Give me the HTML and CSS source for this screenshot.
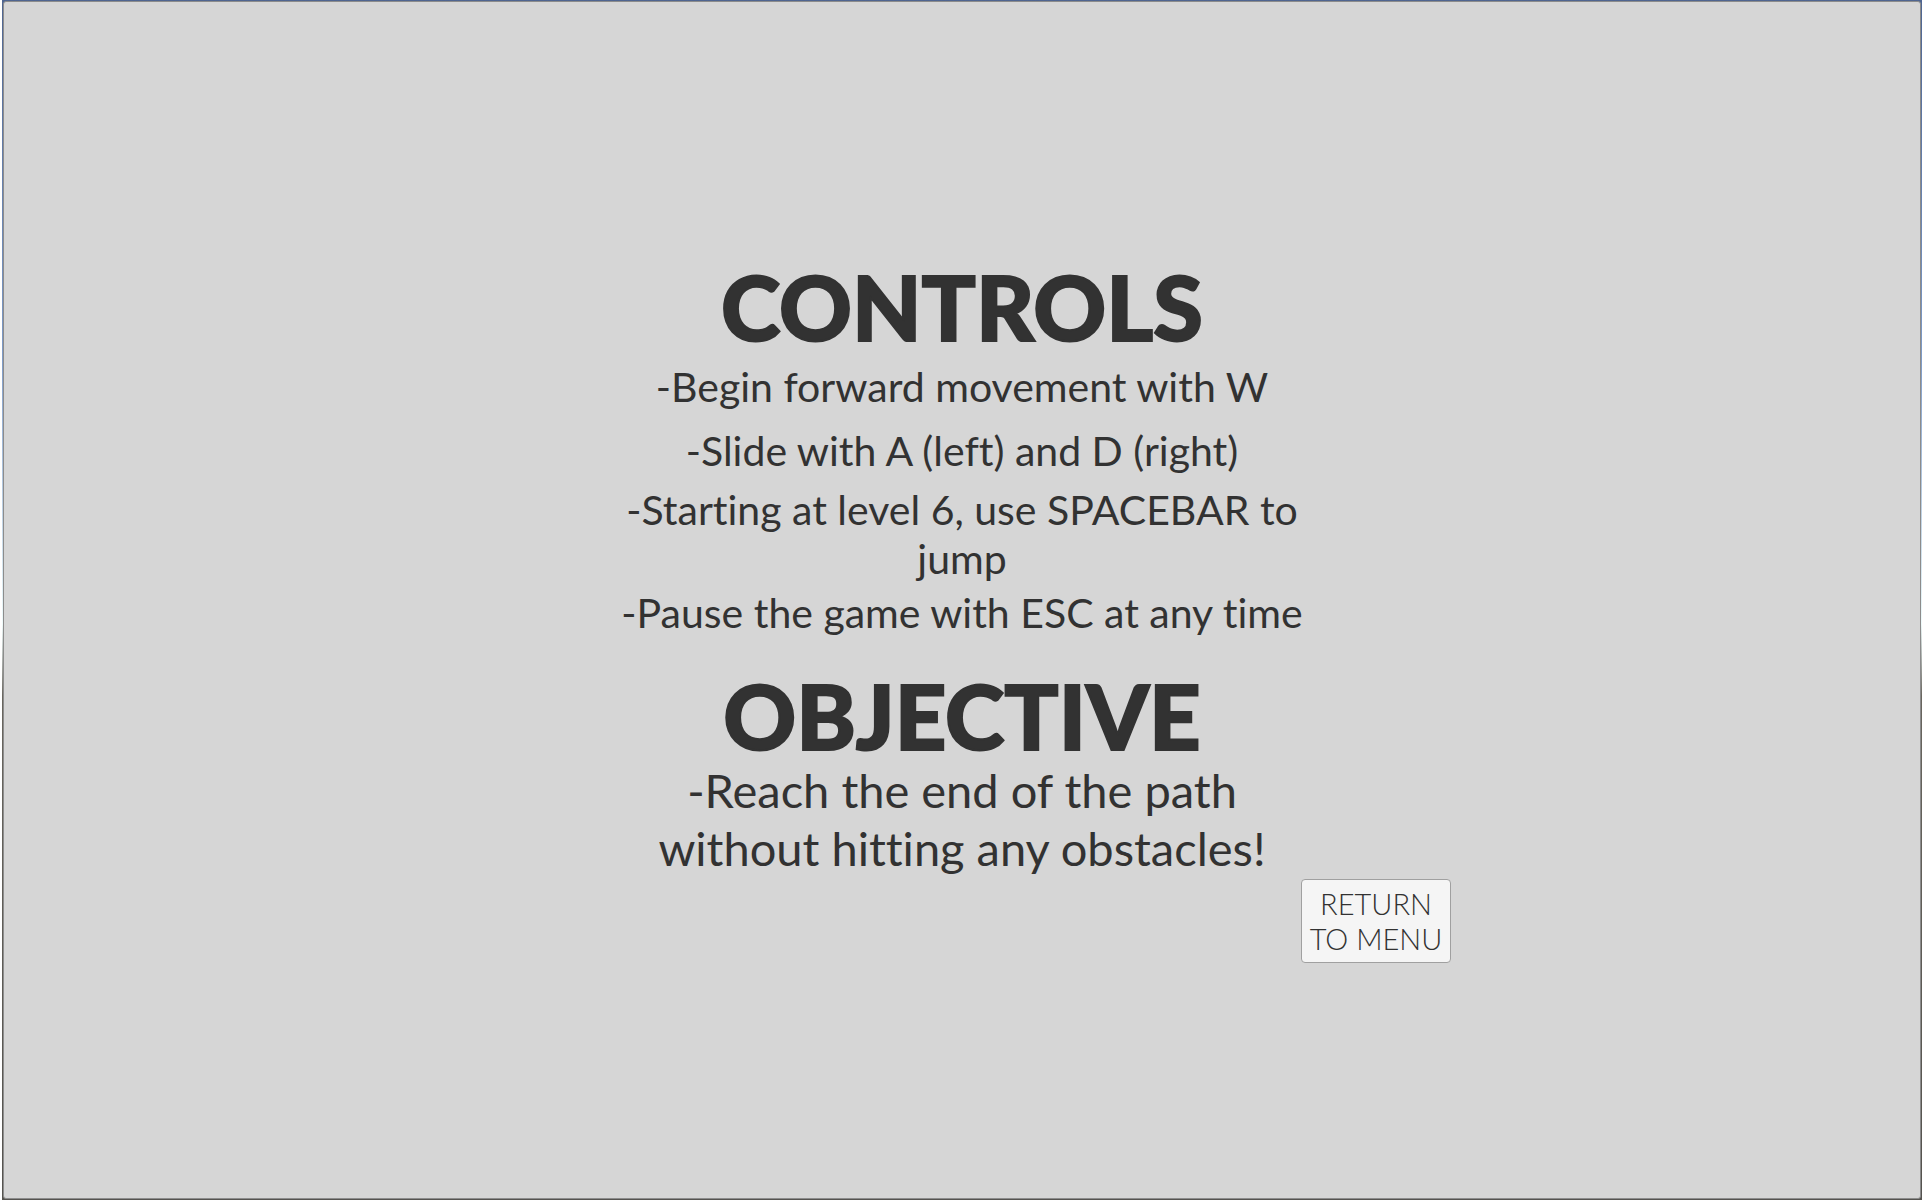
FILE: index.html
```html
<!DOCTYPE html>
<html lang="en">
<head>
<meta charset="utf-8">
<title>Controls</title>
<link rel="stylesheet" href="styles.css">
</head>
<body>
<div class="frame">
  <main class="screen">
    <div class="panel">
      <section class="section">
        <h1 class="title">CONTROLS</h1>
        <p class="line line-roomy">-Begin forward movement with W</p>
        <p class="line line-mid">-Slide with A (left) and D (right)</p>
        <p class="line line-tight">-Starting at level 6, use SPACEBAR to jump</p>
        <p class="line">-Pause the game with ESC at any time</p>
      </section>
      <section class="section">
        <h2 class="title title-objective">OBJECTIVE</h2>
        <p class="goal">-Reach the end of the path without hitting any obstacles!</p>
      </section>
      <button class="return" type="button">RETURN TO MENU</button>
    </div>
  </main>
</div>
</body>
</html>
```
FILE: styles.css
```css
* { box-sizing: border-box; }
body {
  margin: 0;
  background: #fff;
  font-family: Lato, sans-serif;
  font-variant-ligatures: none;
  color: #323232;
}
/* sky-to-ground gradient showing as a thin rim round the screen */
.frame {
  display: flex;
  min-height: calc(100vh - 2px);
  margin: 0 2px 2px;
  padding: 1px;
  background: linear-gradient(#4f6590, #7f9cc8 30%, #eefafa 52%, #69665f 58%, #55534f);
}
.screen {
  flex: 1;
  padding-top: 22px;
  border: 1px solid #8c8c8c;
  border-radius: 3px;
  background: #d6d6d6;
  display: flex;
  justify-content: center;
  align-items: center;
}
.panel {
  display: flex;
  flex-direction: column;
  align-items: center;
  width: 978px;
}
.section { width: 700px; text-align: center; }
.title {
  margin: 0 0 10px;
  font-size: 90px;
  line-height: 92px;
  font-weight: 900;
  -webkit-text-stroke: 2px #323232;
}
.title-objective { margin: 32px 0 0; }
.line { margin: 0; font-size: 41px; line-height: 49px; }
.line-roomy { margin-bottom: 15px; }
.line-mid { margin-bottom: 10px; }
.line-tight { margin-bottom: 5px; }
.goal { margin: 0 20px 2px; font-size: 47px; line-height: 58px; }
.return {
  align-self: flex-end;
  width: 150px;
  padding: 6px 4px;
  border: 1px solid #a0a0a0;
  border-radius: 4px;
  background: #f5f5f5;
  color: #323232;
  font-family: Lato, sans-serif;
  font-weight: 300;
  font-size: 29px;
  line-height: 35px;
}
```
